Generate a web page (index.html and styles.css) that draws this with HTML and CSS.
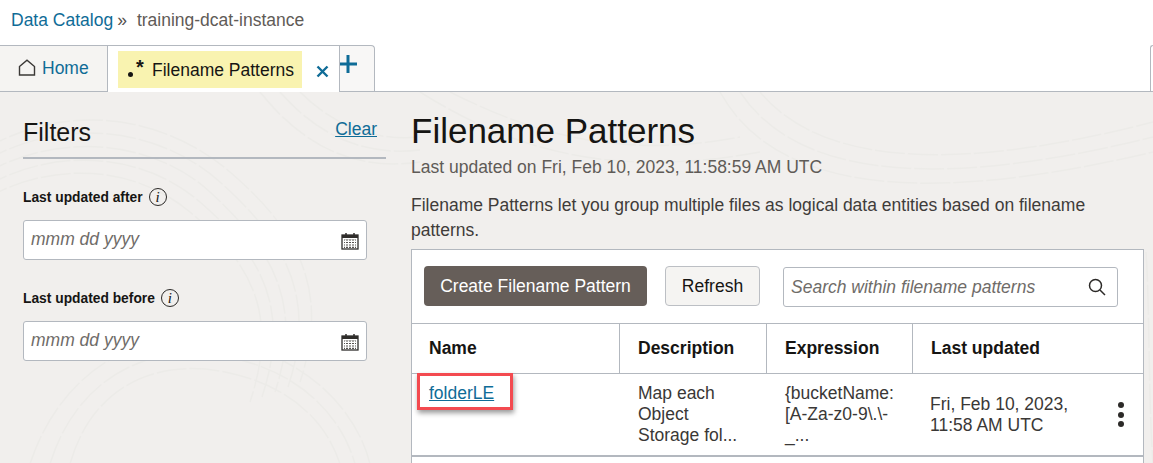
FILE: index.html
```html
<!DOCTYPE html>
<html lang="en">
<head>
<meta charset="utf-8">
<title>Filename Patterns</title>
<link rel="stylesheet" href="styles.css">
</head>
<body>
<nav class="crumbs"><a class="crumb-link">Data Catalog</a><span class="crumb-sep">»</span><span class="crumb-current">training-dcat-instance</span></nav>
<div class="tabs">
  <div class="tab tab-home">
    <svg class="home-icon" width="18" height="18" viewBox="0 0 18 18"><path d="M1.5 7.5 9 1.2l7.500 6.300V16h-15z" fill="none" stroke="#3a3836" stroke-width="1.400"/></svg>
    <span>Home</span>
  </div>
  <div class="tab tab-active">
    <div class="tab-pill"><span class="regex"><i class="dot"></i><b class="star">*</b></span><span>Filename Patterns</span></div>
    <svg class="close-icon" width="13" height="13" viewBox="0 0 13 13"><path d="M1.500 1.500 11.500 11.500M11.500 1.500 1.500 11.500" stroke="#0f6c97" stroke-width="2.400"/></svg>
  </div>
  <div class="tab tab-add"><svg width="18" height="18" viewBox="0 0 18 18"><path d="M9 0v18M0 9h18" stroke="#0f6c97" stroke-width="3"/></svg></div>
  <div class="tab-end"></div>
</div>
<main class="page">
  <svg class="texture" width="1153" height="372" viewBox="0 0 1153 372" fill="none" stroke="#ecebe8" stroke-width="1.500" stroke-dasharray="30 3">
    <path d="M-20 60C60 10 160 20 230 80S330 200 300 290"/><path d="M-20 72C55 25 155 32 220 90S318 205 288 295"/><path d="M-20 85C50 40 150 45 210 100S305 210 275 300"/><path d="M-20 98C48 55 140 58 200 110S292 215 262 305"/><path d="M-20 110C45 70 130 70 190 120S280 220 250 310"/>
    <path d="M30 372C60 280 140 230 230 250S360 330 370 372"/><path d="M50 372C75 290 145 248 228 265S345 335 355 372"/><path d="M70 372C90 300 150 265 225 280S330 340 340 372"/>
    <path d="M260 0C300 50 350 80 420 70"/><path d="M280 0C315 40 360 65 420 58"/><path d="M300 0C330 30 370 50 420 45"/>
    <path d="M420 0C500 50 600 90 760 60"/><path d="M450 0C520 35 610 70 740 45"/><path d="M720 0C770 90 900 120 1153 60"/><path d="M740 0C790 75 910 105 1153 45"/><path d="M760 0C810 60 920 90 1153 30"/>
    <path d="M1146 160C1150 220 1148 300 1153 372"/>
  </svg>
  <aside class="filters">
    <div class="filters-head"><h2>Filters</h2><a class="clear">Clear</a></div>
    <div class="field field-first">
      <div class="field-label"><span>Last updated after</span><span class="info"><i>i</i></span></div>
      <div class="date-input"><span>mmm dd yyyy</span>
        <svg class="cal" width="18" height="18" viewBox="0 0 18 18"><use href="#cal"/></svg>
      </div>
    </div>
    <div class="field">
      <div class="field-label"><span>Last updated before</span><span class="info"><i>i</i></span></div>
      <div class="date-input"><span>mmm dd yyyy</span>
        <svg class="cal" width="18" height="18" viewBox="0 0 18 18"><use href="#cal"/></svg>
      </div>
    </div>
  </aside>
  <section class="content">
    <h1>Filename Patterns</h1>
    <p class="updated">Last updated on Fri, Feb 10, 2023, 11:58:59 AM UTC</p>
    <p class="intro">Filename Patterns let you group multiple files as logical data entities based on filename patterns.</p>
    <div class="card">
      <div class="toolbar">
        <button class="btn btn-primary">Create Filename Pattern</button>
        <button class="btn btn-plain">Refresh</button>
        <div class="search"><span>Search within filename patterns</span>
          <svg width="18" height="18" viewBox="0 0 18 18" fill="none" stroke="#2c2a28" stroke-width="1.500"><circle cx="7.500" cy="7.500" r="6"/><path d="m12 12 5 5"/></svg>
        </div>
      </div>
      <div class="thead">
        <div class="th">Name</div><div class="th">Description</div><div class="th">Expression</div><div class="th">Last updated</div>
      </div>
      <div class="trow">
        <div class="td td-name"><a class="name-link">folderLE</a><span class="callout"></span></div>
        <div class="td">Map each<br>Object<br>Storage fol...</div>
        <div class="td">{bucketName:<br>[A-Za-z0-9\.\-<br>_...</div>
        <div class="td td-date"><span>Fri, Feb 10, 2023,<br>11:58 AM UTC</span><span class="kebab"><i></i><i></i><i></i></span></div>
      </div>
    </div>
  </section>
</main>
<svg class="defs" width="0" height="0"><defs>
  <g id="cal">
    <rect x="1" y="3" width="16" height="14" fill="#fff" stroke="#2f2d2b" stroke-width="1.300"/>
    <rect x="1" y="3" width="16" height="3" fill="#2f2d2b"/>
    <path d="M5 1v4M13 1v4" stroke="#2f2d2b" stroke-width="1.500"/>
    <path d="M3 8h12M3 10.500h12M3 13h12M3 15.300h12" stroke="#55524f" stroke-width="1.200"/>
    <path d="M4.500 7.500v8.500M7.500 7.500v8.500M10.500 7.500v8.500M13.500 7.500v8.500" stroke="#fff" stroke-width="1"/>
  </g>
</defs></svg>
</body>
</html>
```
FILE: styles.css
```css
* { box-sizing: border-box; }
html, body { margin: 0; height: 463px; overflow: hidden; }
body { font-family: "Liberation Sans", Arial, sans-serif; font-size: 17.500px; color: #161513; background: #fff; }
.defs { position: absolute; }

.crumbs { height: 45px; padding: 11px 0 0 11px; line-height: 18px; white-space: nowrap; }
.crumb-link { color: #0f6c97; }
.crumb-sep { color: #56524e; margin: 0 10px 0 4px; }
.crumb-current { color: #5f5b57; }

.tabs { display: flex; height: 47px; border-bottom: 1px solid #b3b8bf; }
.tab { height: 47px; display: flex; align-items: center; }
.tab-home { width: 108px; background: #f5f4f2; border-top: 1px solid #b3b8bf; border-right: 1px solid #b3b8bf; padding: 0 0 0 18px; color: #0f6c97; gap: 6px; height: 46px; }
.home-icon { flex: none; margin-bottom: 1px; }
.tab-active { width: 232px; background: #fff; border-top: 1px solid #b3b8bf; border-right: 1px solid #b3b8bf; padding: 5px 0 0 10px; position: relative; align-items: flex-start; }
.tab-pill { width: 184px; height: 37px; background: #f9f3b0; display: flex; align-items: center; padding: 1px 0 0 10px; color: #161513; white-space: nowrap; }
.regex { position: relative; display: inline-block; width: 24px; height: 20px; flex: none; }
.dot { position: absolute; left: 0; top: 12px; width: 5px; height: 5px; border-radius: 50%; background: #161513; }
.star { position: absolute; left: 8px; top: -3px; font-size: 20px; font-weight: 700; font-style: normal; line-height: 20px; }
.close-icon { margin: 14px 0 0 14px; flex: none; }
.tab-add { width: 35px; height: 46px; background: #f8f7f6; border-top: 1px solid #b3b8bf; border-right: 1px solid #b3b8bf; border-radius: 0 4px 0 0; align-items: flex-start; padding-top: 9px; }
.tab-add svg { margin-left: -1px; }
.tab-end { margin-left: auto; width: 3px; height: 46px; border-left: 1px solid #b3b8bf; border-top: 1px solid #b3b8bf; border-radius: 4px 0 0 0; }

.page { position: relative; height: 371px; background: #f1efed; display: flex; overflow: hidden; }
.texture { position: absolute; left: 0; top: 0; }

.filters { position: relative; width: 363px; margin-left: 23px; flex: none; }
.filters-head { height: 67px; padding-top: 26px; border-bottom: 2px solid #b3b8bf; display: flex; justify-content: space-between; align-items: flex-start; padding-right: 9px; }
.filters-head h2 { margin: 0; font-size: 25px; font-weight: 400; line-height: 28px; }
.clear { color: #0f6c97; text-decoration: underline; margin-top: 1px; line-height: 20px; }
.field { width: 344px; margin-top: 28px; }
.field-label { display: flex; align-items: center; gap: 6px; height: 19px; padding-top: 1px; font-size: 13.800px; font-weight: 700; }
.info { width: 18px; height: 18px; border: 1.300px solid #2c2a28; border-radius: 50%; display: flex; align-items: center; justify-content: center; }
.info i { font-family: "Liberation Serif", serif; font-size: 15px; font-weight: 400; line-height: 1; }
.date-input { margin-top: 14px; height: 40px; background: #fff; border: 1px solid #b3b8bf; border-radius: 3px; display: flex; align-items: center; justify-content: space-between; padding: 0 7px; font-style: italic; color: #6f6c69; }
.date-input span { margin-bottom: 2px; }
.cal { flex: none; margin-top: 1px; }

.content { position: relative; width: 733px; margin-left: 25px; flex: none; }
.content h1 { margin: 19px 0 0; font-size: 35px; font-weight: 400; line-height: 40px; color: #161513; }
.updated { margin: 6px 0 0; color: #5f5b57; line-height: 21px; }
.intro { margin: 15px 0 0; color: #3f3c3a; line-height: 25px; }
.card { margin-top: 6px; background: #fff; border: 1px solid #b3b8bf; border-bottom: 0; height: 221px; }
.toolbar { height: 74px; padding: 16px 0 0 12px; display: flex; align-items: flex-start; border-bottom: 1px solid #b3b8bf; }
.btn { font: inherit; height: 40px; border-radius: 4px; color: #161513; padding: 0; }
.btn-primary { width: 223px; background: #665e59; border: 0; color: #fff; }
.btn-plain { width: 95px; margin-left: 18px; background: #f5f4f2; border: 1px solid #bcbfc4; }
.search { width: 335px; height: 40px; margin: 1px 0 0 23px; border: 1px solid #b3b8bf; border-radius: 3px; display: flex; align-items: center; justify-content: space-between; padding: 0 11px 0 7px; font-style: italic; color: #6f6c69; }
.thead, .trow { display: grid; grid-template-columns: 207px 147px 146px 1fr; }
.thead { height: 50px; border-bottom: 1px solid #b3b8bf; }
.th { font-weight: 700; padding: 15px 0 0 18px; border-left: 1px solid #b3b8bf; line-height: 19px; color: #161513; }
.th:first-child { border-left: 0; padding-left: 17px; }
.trow { height: 83px; border-bottom: 2px solid #b3b8bf; color: #3a3836; line-height: 21px; }
.td { padding: 9px 0 0 19px; white-space: nowrap; }
.td-name { position: relative; padding: 9px 0 0 17px; }
.name-link { color: #0f6c97; text-decoration: underline; }
.callout { position: absolute; left: 5px; top: -1px; width: 96px; height: 37px; border: 3px solid #f34a50; box-shadow: 1px 3px 5px rgba(0,0,0,.4); }
.td-date { display: flex; justify-content: space-between; padding: 20px 0 0 18px; position: relative; }
.kebab { display: flex; flex-direction: column; gap: 3.500px; margin: 8px 19px 0 0; }
.kebab i { display: block; width: 6px; height: 6px; border-radius: 50%; background: #2c2a28; }
```
